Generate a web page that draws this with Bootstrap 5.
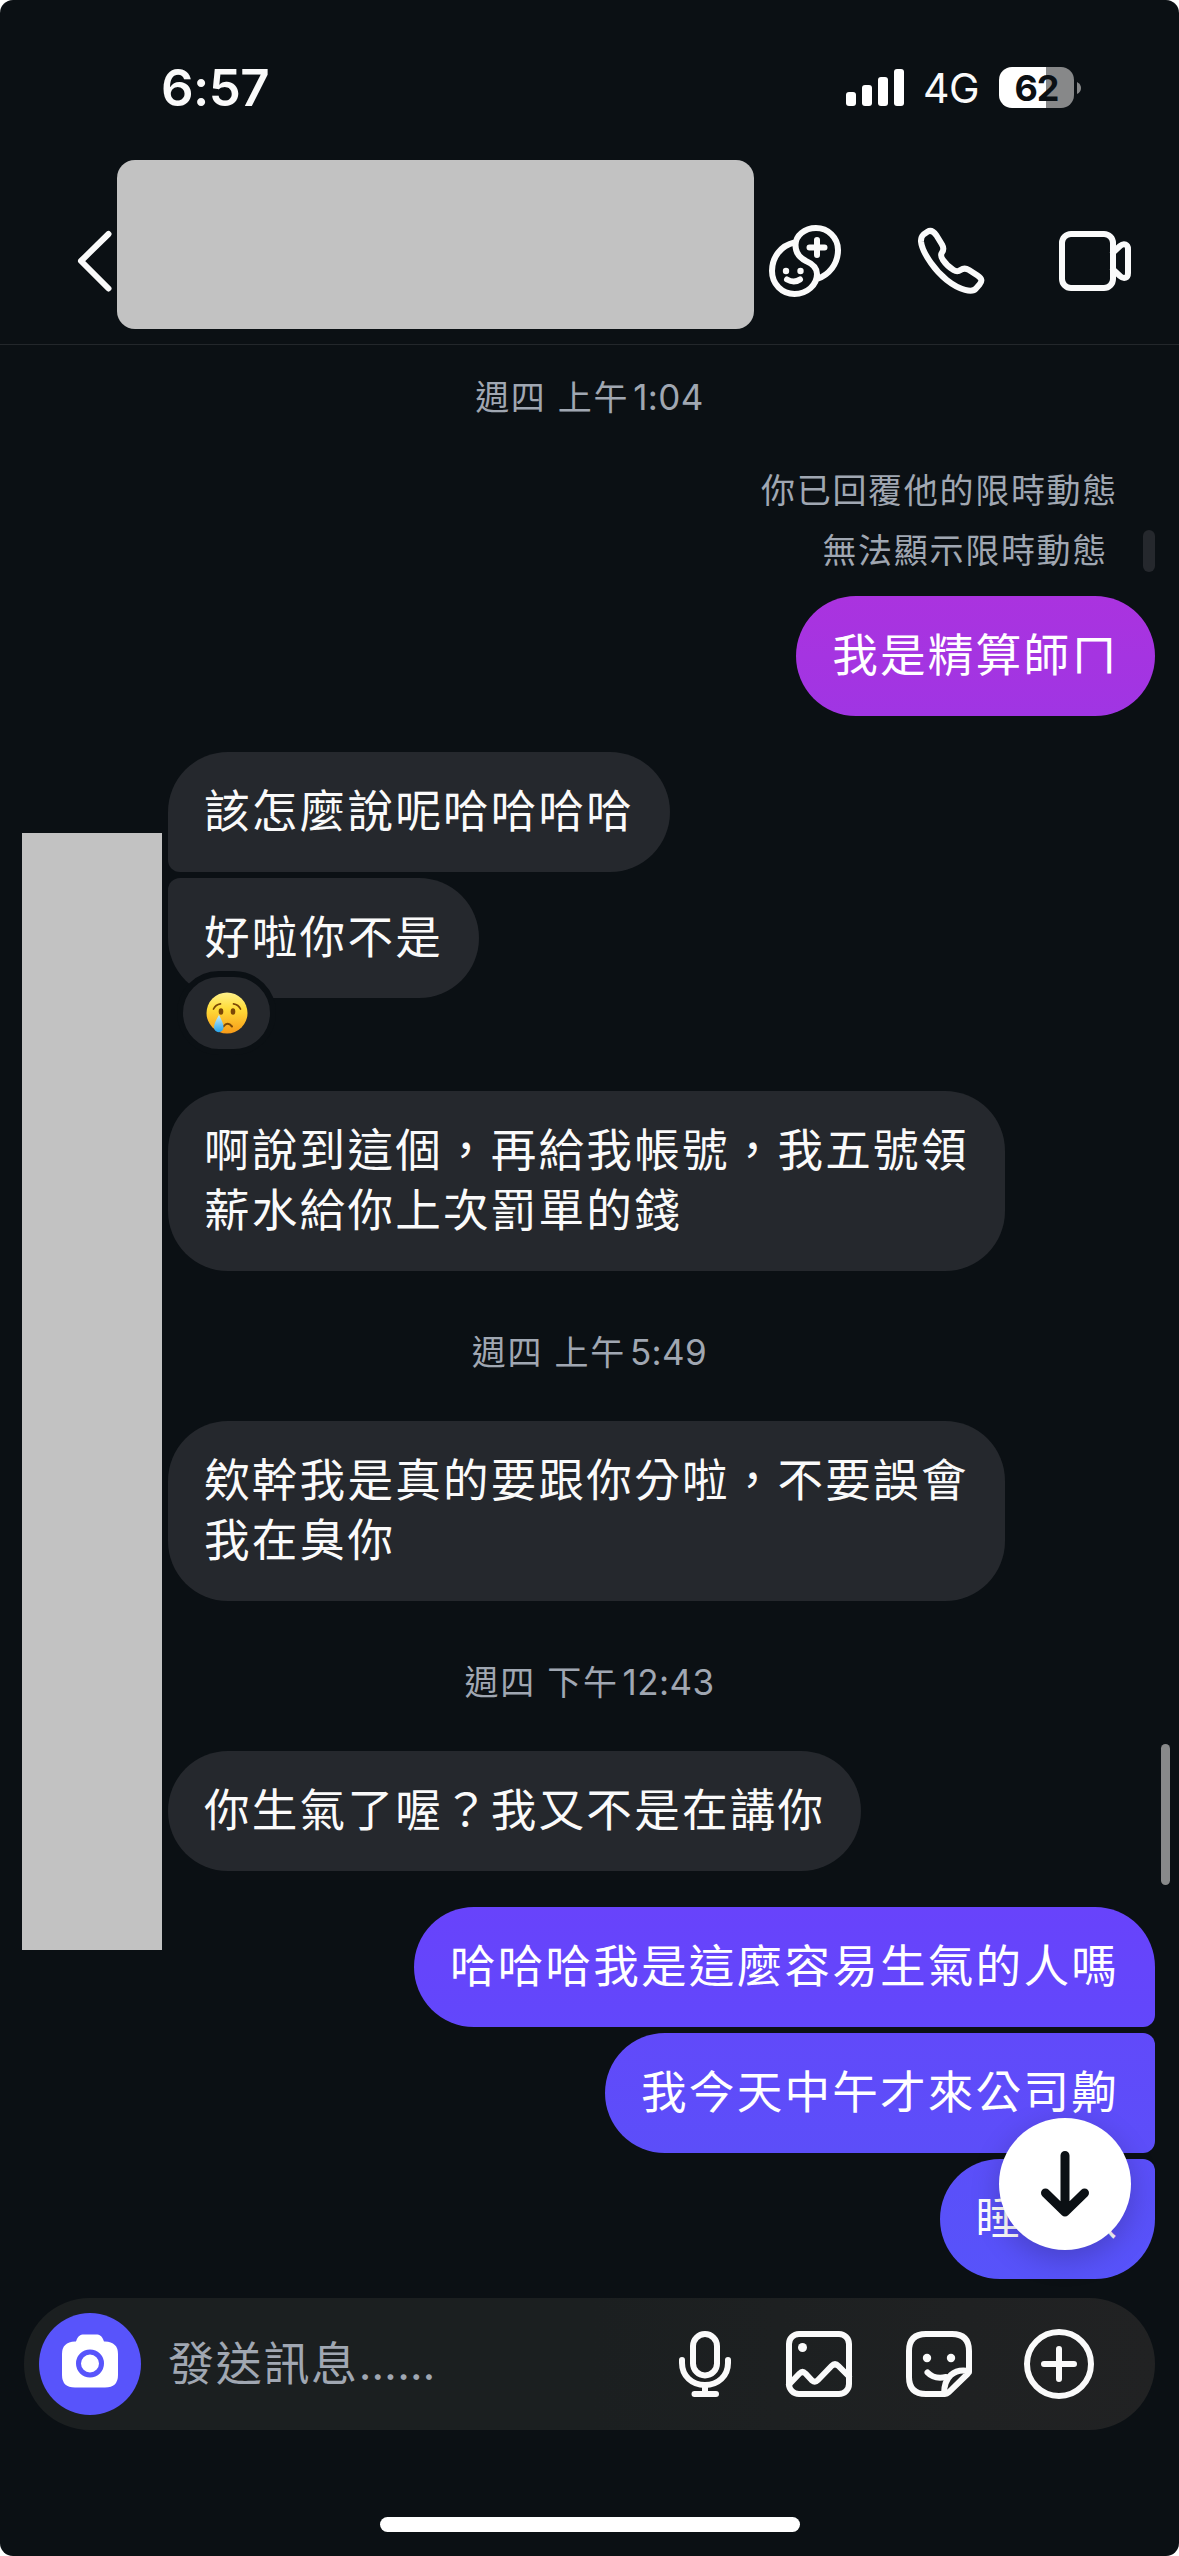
<!DOCTYPE html>
<html lang="zh-Hant">
<head>
<meta charset="utf-8">
<meta name="viewport" content="width=device-width, initial-scale=1">
<title>聊天</title>
<link rel="stylesheet" href="https://cdn.jsdelivr.net/npm/bootstrap@5.3.0/dist/css/bootstrap.min.css">
<style>
:root{--ink:#0b1014;--bub:#25282d;--mut:#a0a7b2}
html,body{margin:0;background:#fff;overflow:hidden}
body{font-family:Inter,"Noto Sans CJK TC",sans-serif;color:#fafafa}
svg{display:block;flex:none;overflow:visible}
.ic{fill:none;stroke:#fafafa;stroke-width:6;stroke-linecap:round;stroke-linejoin:round}
.phone{width:1179px;height:2556px;background:var(--ink);border-radius:13px;overflow:hidden}
.status{height:160px;padding:0 97px 0 161px}
.clock{font-size:51px;font-weight:600;line-height:60px;padding-top:58px;letter-spacing:-.6px}
.sig{padding-top:67px;height:108px}
.net{font-size:41px;line-height:41px;margin-left:19px;width:58px;letter-spacing:-.5px;padding-top:2px}
.batt{width:75px;height:41px;border-radius:13px;margin-left:18px;background:linear-gradient(90deg,#fff 47px,#878889 47px);color:var(--ink);font-weight:700;font-size:36px;letter-spacing:-1px}
.head{height:185px;border-bottom:1px solid #23272b;padding-left:78px}
.mask-name{width:637px;height:169px;border-radius:18px;background:#c2c2c2}
.chat{height:1953px}
.cjk{font-family:"Noto Sans CJK TC",sans-serif}
.stamp{font-size:34px;line-height:42px;height:42px;letter-spacing:1.7px;color:var(--mut);text-align:center}
.stamp span{letter-spacing:.4px;font-size:35px;line-height:1;margin-left:4px}
.first-stamp{margin-top:32px}
.note{font-size:34px;line-height:60px;letter-spacing:1.7px;color:var(--mut)}
.bub{font-family:"Noto Sans CJK TC",sans-serif;font-size:45.600px;line-height:60px;letter-spacing:2.200px;padding:26px 36px 34px;border-radius:60px;background:var(--bub);white-space:nowrap;width:max-content}
.in{margin-left:168px}
.out{margin-left:auto;margin-right:24px;color:#fff}
.bl{border-bottom-left-radius:12px}.tl{border-top-left-radius:12px}
.br{border-bottom-right-radius:12px}.tr{border-top-right-radius:12px}
.react{left:9px;top:93px;width:99px;height:84px;border:6px solid var(--ink);border-radius:42px;background:var(--bub)}
.mask-av{left:22px;top:488px;width:140px;height:1117px;background:#c2c2c2}
.thumb{left:1161px;top:1399px;width:9px;height:141px;border-radius:5px;background:#88898a}
.down{left:999px;top:1773px;width:132px;height:132px;border-radius:50%;background:#fff;box-shadow:0 9px 30px rgba(0,0,0,.2)}
.composer{width:1131px;height:132px;border-radius:66px;margin-left:24px;padding-left:15px;background:linear-gradient(90deg,#1b1f20 50%,#212223)}
.cam{width:102px;height:102px;background:#5854fb}
.ph{font-family:"Noto Sans CJK TC",sans-serif;font-size:46px;letter-spacing:1.7px;color:var(--mut);margin-left:27px;width:511px;line-height:60px;height:60px;margin-top:-8px}
.ph span{font-family:Inter,sans-serif;font-size:44px;line-height:1;letter-spacing:.3px}
.home{width:420px;height:15px;border-radius:8px;background:#fff;margin:87px auto 0}
</style>
</head>
<body>
<div class="phone">
  <div class="status d-flex justify-content-between align-items-start">
    <div class="clock">6:57</div>
    <div class="sig d-flex align-items-center">
      <svg width="58" height="37" fill="#fff"><rect y="23" width="10" height="14" rx="3"/><rect x="16" y="16" width="10" height="21" rx="3"/><rect x="32" y="8" width="10" height="29" rx="3"/><rect x="48" width="10" height="37" rx="3"/></svg>
      <div class="net">4G</div>
      <div class="batt d-flex align-items-center justify-content-center">62</div>
      <svg width="5" height="12" style="margin-left:3px"><path d="M0 0Q4 2 4 6T0 12Z" fill="#878889"/></svg>
    </div>
  </div>
  <header class="head d-flex">
    <svg width="39" height="169" viewBox="78 160 39 169" class="ic"><path d="M108.500 234L81 261L108.500 288.500"/></svg>
    <div class="mask-name"></div>
    <svg width="425" height="184" viewBox="754 160 425 184" class="ic">
      <path d="M794.500 242.500C781 245.500 772 257 772 271C772 284 782 294 794.500 294C807 294 817 285 817 274C817 268 813 264 806 261C799 257.500 795.500 252 795.500 245C795.500 235.500 804.500 228 816 228C828 228 838 237.500 838 250C838 264 829 275 817 279"/>
      <path d="M817 240V255M809.500 247.500H824.500"/>
      <path d="M787 279.500Q794 283.500 800 279.500"/>
      <circle cx="786" cy="271" r="3.200" fill="#fafafa" stroke="none"/><circle cx="800.500" cy="271" r="3.200" fill="#fafafa" stroke="none"/>
      <path d="M923.500 234.500L927.500 231.800C931 229.500 934 232 936.500 235.500L942 244.500C944 248 943.500 250.500 942 252.500C940.500 254.500 941 257 943 260C946 264.500 949.500 267.500 953.500 270C956 271.500 958.500 271.500 960.500 270C963.500 268 966.500 268.500 969 270L977.500 275.500C982 278.500 982.500 281 979.500 284.500L976 288.500C973.500 291.500 969.500 291 965 289.800C953 286.500 940 276 931 263C925 254.500 921.500 247 921 241.500C920.800 238.500 921.500 236.500 923.500 234.500Z"/>
      <rect x="1062" y="234" width="51" height="54" rx="9"/>
      <path d="M1113 252.500L1120 246C1124 242.500 1128 244.500 1128 249V273C1128 278 1124 279.500 1120 276L1113 269.500"/>
    </svg>
  </header>

  <main class="chat position-relative d-flex flex-column">
    <div class="stamp first-stamp">週四 上午<span>1:04</span></div>
    <div class="note cjk text-end" style="padding:40px 61px 0 0">你已回覆他的限時動態</div>
    <div class="note cjk d-flex justify-content-end align-items-center" style="padding-right:24px"><span>無法顯示限時動態</span><i style="width:12px;height:42px;border-radius:6px;background:var(--bub);margin:4px 0 0 35px"></i></div>
    <div class="bub out" style="margin-top:17px;background:linear-gradient(#aa33df,#a035e3)">我是精算師ㄇ</div>

    <div class="bub in bl" style="margin-top:36px">該怎麼說呢哈哈哈哈</div>
    <div class="bub in tl position-relative" style="margin-top:6px">好啦你不是
      <div class="react position-absolute d-flex align-items-center justify-content-center">
        <svg width="42" height="42" viewBox="0 0 42 42">
          <defs><linearGradient id="f" x2="0" y2="1"><stop stop-color="#fff18a"/><stop offset=".4" stop-color="#ffdc39"/><stop offset="1" stop-color="#f79a18"/></linearGradient><linearGradient id="t" x2="0" y2="1"><stop stop-color="#c8efff"/><stop offset="1" stop-color="#27a4ea"/></linearGradient></defs>
          <circle cx="21" cy="21" r="20.500" fill="url(#f)"/>
          <g fill="none" stroke="#7b4706" stroke-width="1.700" stroke-linecap="round"><path d="M7.500 17Q9.500 12.500 14.500 11.800M27.500 11.800Q32.500 12.500 34.500 17"/><path d="M17.500 34.500Q21.500 29 26 34.500" stroke-width="2"/></g>
          <ellipse cx="15" cy="19.500" rx="2.300" ry="3.300" fill="#7b4706"/><ellipse cx="27" cy="19.500" rx="2.300" ry="3.300" fill="#7b4706"/>
          <path d="M13 23Q17.500 31 17.500 35.500A4.700 4.700 0 0 1 8 35.500Q8 31 13 23Z" fill="url(#t)"/>
        </svg>
      </div>
    </div>
    <div class="bub in" style="margin-top:93px">啊說到這個，再給我帳號，我五號領<br>薪水給你上次罰單的錢</div>
    <div class="stamp" style="margin-top:61px">週四 上午<span>5:49</span></div>
    <div class="bub in" style="margin-top:47px">欸幹我是真的要跟你分啦，不要誤會<br>我在臭你</div>
    <div class="stamp" style="margin-top:61px">週四 下午<span>12:43</span></div>
    <div class="bub in" style="margin-top:47px">你生氣了喔？我又不是在講你</div>
    <div class="bub out br" style="margin-top:36px;background:linear-gradient(#6843fb,#6247fb)">哈哈哈我是這麼容易生氣的人嗎</div>
    <div class="bub out br tr" style="margin-top:6px;background:linear-gradient(#614afa,#5c4ef9)">我今天中午才來公司齁</div>
    <div class="bub out tr" style="margin-top:6px;background:linear-gradient(#5b4ff9,#5753fa)">睡到欸</div>

    <div class="mask-av position-absolute"></div>
    <div class="thumb position-absolute"></div>
    <div class="down position-absolute">
      <svg width="132" height="132" class="ic" style="stroke:#0b1014;stroke-width:9"><path d="M66 37.500V92M46.500 75L66 94L85.500 75"/></svg>
    </div>
  </main>

  <div class="composer d-flex align-items-center">
    <div class="cam rounded-circle">
      <svg width="102" height="102" viewBox="39 2313 102 102"><path d="M75 2341.500H76C78 2336 80 2334.500 84 2334.500H96C100 2334.500 102 2336 104 2341.500H105Q118 2342 118 2354V2375Q118 2387.500 105 2387.500H75Q62 2387.500 62 2375V2354Q62 2342 75 2341.500Z" fill="#fff"/><circle cx="90" cy="2363.500" r="11.500" fill="none" stroke="#5854fb" stroke-width="5"/></svg>
    </div>
    <div class="ph">發送訊息<span>……</span></div>
    <svg width="416" height="70" viewBox="679 2329 416 70" class="ic">
      <rect x="693" y="2334" width="24" height="41.500" rx="12"/><path d="M682 2360V2363C682 2376 692 2385 705 2385S728 2376 728 2363V2360M705 2385V2394M694.500 2394H716"/>
      <rect x="789" y="2334" width="60" height="60" rx="10"/><circle cx="802.500" cy="2347.500" r="4.500" fill="#fafafa" stroke="none"/><path d="M789 2384.500L799.500 2373.500Q802.500 2370.500 805.500 2373.500L812 2380.500Q815 2383 818 2380L831.500 2366Q835 2362.500 838.500 2366L849 2376.500"/>
      <path d="M969 2372V2351Q969 2334 952 2334H926Q909 2334 909 2351V2377Q909 2394 926 2394H945Q947 2394 948.500 2392.500L967.500 2374Q969 2372.500 969 2371C954 2368 944 2377 944 2394"/>
      <path d="M927.500 2372.500Q934 2379.500 946 2377"/><circle cx="927" cy="2358" r="4.200" fill="#fafafa" stroke="none"/><circle cx="951" cy="2358" r="4.200" fill="#fafafa" stroke="none"/>
      <circle cx="1059" cy="2364" r="32"/><path d="M1059 2349V2379M1044 2364H1074"/>
    </svg>
  </div>
  <div class="home"></div>
</div>
<script src="https://cdn.jsdelivr.net/npm/bootstrap@5.3.0/dist/js/bootstrap.bundle.min.js"></script>
</body>
</html>
